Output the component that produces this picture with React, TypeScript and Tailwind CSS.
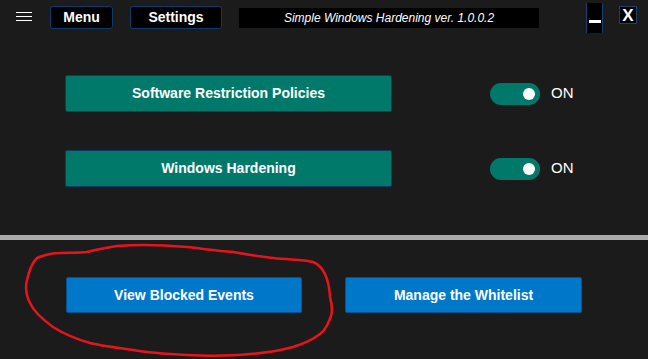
import React from "react";

function Toggle() {
  return (
    <div className="ml-[98px] flex h-[22px] w-[50px] items-center justify-end rounded-full bg-[#00796b] pr-[5px]">
      <div className="h-[12px] w-[12px] rounded-full bg-white" />
    </div>
  );
}

function Row({ label }: { label: string }) {
  return (
    <div className="flex items-center">
      <div className="ml-[65px] flex h-[37px] w-[327px] items-center justify-center rounded-[2px] border border-[#0c3b6a] bg-[#00796b] text-[14px] font-bold text-white">
        {label}
      </div>
      <Toggle />
      <span className="ml-[11px] text-[15px] text-white">ON</span>
    </div>
  );
}

export default function App() {
  return (
    <div
      className="relative h-[359px] w-[648px] overflow-hidden bg-[#1b1b1b]"
      style={{ fontFamily: '"Liberation Sans", Arial, sans-serif' }}
    >
      {/* top bar */}
      <div className="flex h-[36px] items-start">
        <div className="ml-[16px] mt-[12px] flex w-[16px] flex-col gap-[3px]">
          <div className="h-px bg-white" />
          <div className="h-px bg-white" />
          <div className="h-px bg-white" />
        </div>
        <div className="ml-[18px] mt-[6px] flex h-[23px] w-[63px] items-center justify-center rounded-[3px] border border-[#0d3a6b] bg-black text-[14px] font-bold text-white">
          Menu
        </div>
        <div className="ml-[17px] mt-[6px] flex h-[23px] w-[92px] items-center justify-center rounded-[3px] border border-[#0d3a6b] bg-black text-[14px] font-bold text-white">
          Settings
        </div>
        <div className="ml-[17px] mt-[8px] flex h-[20px] w-[300px] items-center justify-center bg-black text-[12px] italic text-white">
          Simple Windows Hardening ver. 1.0.0.2
        </div>
        <div className="ml-[47px] mt-[3px] flex h-[30px] w-[17px] items-start justify-center border-x border-[#16406e] bg-black pt-[17px]">
          <div className="h-[3px] w-[12px] bg-white" />
        </div>
        <div className="ml-[16px] mt-[6px] flex h-[18px] w-[18px] items-center justify-center border border-[#16406e] bg-black text-[17px] font-bold leading-none text-white">
          X
        </div>
      </div>

      {/* toggles section */}
      <div className="flex flex-col gap-[38px] pt-[39px]">
        <Row label="Software Restriction Policies" />
        <Row label="Windows Hardening" />
      </div>

      {/* divider */}
      <div className="mt-[48px] h-[5px] w-full bg-[#aaaaaa]" />

      {/* bottom buttons */}
      <div className="flex pt-[37px]">
        <div className="ml-[66px] flex h-[36px] w-[236px] items-center justify-center rounded-[2px] border border-[#0b4f8a] bg-[#0077c8] text-[14px] font-bold text-white">
          View Blocked Events
        </div>
        <div className="ml-[43px] flex h-[36px] w-[237px] items-center justify-center rounded-[2px] border border-[#0b4f8a] bg-[#0077c8] text-[14px] font-bold text-white">
          Manage the Whitelist
        </div>
      </div>

      {/* hand-drawn red annotation */}
      <svg
        className="pointer-events-none absolute left-0 top-0"
        width="648"
        height="359"
        viewBox="0 0 648 359"
      >
        <path
          d="M37 258 C55 250 70 254 87 252 C98 249 104 248 117 246 C140 244 165 245 187 247 C205 249 218 251 233 252 C250 255 262 257 273 258 C290 260 302 259 313 262 C325 267 329 280 330 297 C332 305 333 310 331 316 C328 324 326 329 320 334 C311 341 303 344 293 347 C278 351 265 353 250 354 C230 356 208 356 187 355 C168 354 150 353 133 350 C118 348 103 346 90 343 C76 339 64 334 53 327 C42 319 34 312 30 303 C26 295 25 288 27 280 C29 271 31 264 37 258 Z"
          fill="none"
          stroke="#e8141c"
          strokeWidth="2.5"
          strokeLinejoin="round"
        />
      </svg>
    </div>
  );
}
